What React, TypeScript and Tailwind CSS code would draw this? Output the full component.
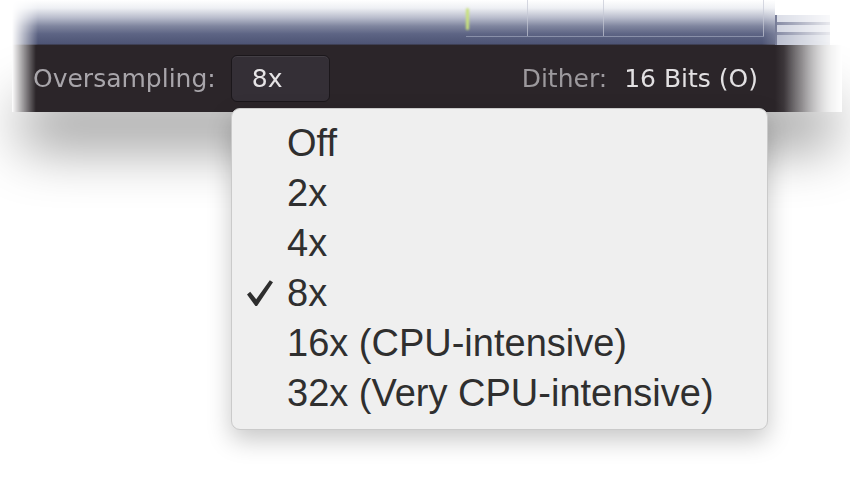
import { useState } from "react";

const options = [
  "Off",
  "2x",
  "4x",
  "8x",
  "16x (CPU-intensive)",
  "32x (Very CPU-intensive)",
];

function Check() {
  return (
    <svg width="28" height="28" viewBox="0 0 28 28" className="block">
      <path d="M1 15.5 L4.2 12.8 L10.2 20.2 L23.8 1.2 L27 3.2 L11 27 L9.4 27 Z" fill="#2e2e2e" />
    </svg>
  );
}

export default function App() {
  const [selected] = useState("8x");

  return (
    <div className="relative w-[850px] h-[477px] bg-white overflow-hidden font-['DejaVu_Sans',sans-serif]">
      {/* plugin window header */}
      <div className="ml-[12px] w-[830px]">
        {/* top strip */}
        <div className="flex h-[45px] [mask-image:linear-gradient(to_right,transparent_0,black_26px,black_750px,transparent_830px)]">
          <div className="w-[763px] h-full bg-[linear-gradient(to_bottom,#ffffff_0px,#eef0f4_8px,#b7bbcb_18px,#80869f_26px,#5d6484_34px,#4d5474_44px,#2e2a33_45px)] flex">
            <div className="ml-[454px] h-[37px] w-[298px] flex border-b border-[#aab0c4]/60">
              <div className="w-[3px] h-[22px] mt-[8px] bg-[#c8e27a] rounded-full blur-[1px]" />
              <div className="w-[59px] border-r border-[#c4c8d4]/70" />
              <div className="w-[76px] border-r border-[#c4c8d4]/70" />
              <div className="flex-1 border-r border-[#c4c8d4]/70" />
            </div>
          </div>
          <div className="mt-[15px] h-[31px] w-[55px] flex flex-col border-l-2 border-[#5d6383] bg-[#b4b9cb]">
            <div className="h-[10px] border-b-[3px] border-[#6b7190] bg-[#d3d6e2]" />
            <div className="h-[10px] border-b-[3px] border-[#6b7190] bg-[#c6cad9]" />
            <div className="flex-1 bg-[#aab0c4]" />
          </div>
        </div>

        {/* dark control bar */}
        <div className="w-[830px] shadow-[0_45px_55px_-10px_rgba(0,0,0,0.42)]">
          <div className="h-[67px] flex items-center bg-[linear-gradient(to_right,#2b2529_0,#2b2529_763px,#5e5a5d_790px,#bdbdbd_820px)] [mask-image:linear-gradient(to_right,transparent_0,black_24px,black_772px,transparent_830px)] text-[25px] leading-none">
            <span className="ml-[21px] text-[#a8a5aa]">Oversampling:</span>
            <div className="ml-[15px] w-[99px] h-[47px] rounded-[6px] bg-[#342f36] border border-[#1b171b] shadow-[inset_0_1px_0_rgba(255,255,255,0.08)] flex items-center pl-[20px] text-[#e6e4e6]">
              8x
            </div>
            <span className="ml-auto text-[#9c999d]">Dither:</span>
            <span className="ml-[17px] mr-[84px] text-[#e2e0e2]">16 Bits (O)</span>
          </div>
        </div>
      </div>

      {/* oversampling dropdown */}
      <div className="absolute left-[231px] top-[108px] w-[537px] h-[322px] rounded-[9px] bg-[#efefef] border border-[#cacaca] shadow-[0_10px_24px_rgba(0,0,0,0.22)] pt-[9px] font-['Liberation_Sans',Arial,sans-serif] text-[38px] leading-[50px] text-[#2f2f2f]">
        {options.map((o) => (
          <div key={o} className="flex items-center h-[50px]">
            <div className="w-[55px] flex justify-end pr-[13px]">
              {o === selected && <Check />}
            </div>
            <span>{o}</span>
          </div>
        ))}
      </div>
    </div>
  );
}
